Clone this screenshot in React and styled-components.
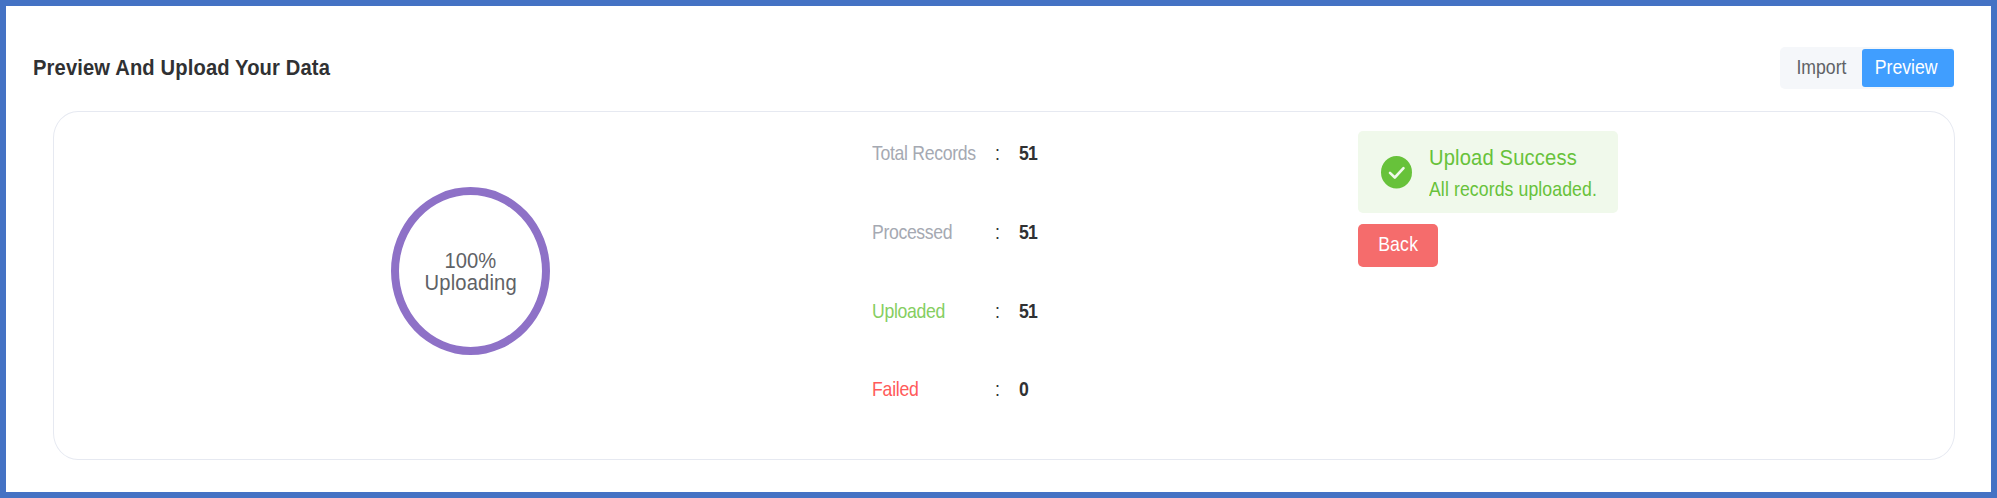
import React from "react";
import styled, { createGlobalStyle } from "styled-components";

const GlobalStyle = createGlobalStyle`
  * { box-sizing: border-box; }
  body { margin: 0; background: #fff; font-family: "Liberation Sans", Arial, sans-serif; }
`;

const Page = styled.main`
  width: 1997px;
  height: 498px;
  padding: 41px 37px 0 27px;
  border: 6px solid #4472c4;
  background: #fff;
  overflow: hidden;
`;

const Header = styled.header`
  display: flex;
  justify-content: space-between;
  align-items: center;
  height: 42px;
`;

const Text = styled.span`
  display: block;
  margin: 0;
  white-space: nowrap;
  font-size: ${(p) => p.$size || 18.67}px;
  line-height: ${(p) => p.$line || 24}px;
  font-weight: ${(p) => (p.$bold ? 700 : 400)};
  letter-spacing: ${(p) => p.$spacing || 0}px;
  color: ${(p) => p.$color || "#303133"};
  transform: scale(0.9467, 1.04);
  transform-origin: ${(p) => p.$origin || "left"} 60%;
`;

const Tabs = styled.nav`
  display: flex;
  align-items: center;
  width: 174px;
  height: 42px;
  border-radius: 5px;
  background: #f5f7fa;
`;

const Tab = styled.button`
  display: flex;
  justify-content: center;
  align-items: center;
  width: ${(p) => p.$width}px;
  height: 38px;
  padding: 0 ${(p) => (p.$active ? 4 : 0)}px 1px 0;
  border: 0;
  border-radius: 3px;
  font-family: inherit;
  background: ${(p) => (p.$active ? "#409eff" : "transparent")};
`;

const Card = styled.section`
  display: grid;
  grid-template-columns: 818px 486px 1fr;
  width: 1902px;
  height: 349px;
  margin: 22px 0 0 20px;
  border: 1px solid #e6e9f1;
  border-radius: 25px / 27px;
`;

const RingPanel = styled.div`
  display: flex;
  padding: 75px 0 0 337px;
`;

const Ring = styled.div`
  display: flex;
  flex-direction: column;
  align-items: center;
  justify-content: center;
  width: 159px;
  height: 168px;
  padding-top: 3px;
  border: 8px solid #8e71c7;
  border-radius: 50%;
`;

const Stats = styled.dl`
  margin: 0;
  padding-top: 31px;
`;

const StatRow = styled.div`
  display: grid;
  grid-template-columns: 123px 24px 60px;
  height: 78.8px;
`;

const Result = styled.div`
  padding-top: 19px;
`;

const Alert = styled.div`
  display: flex;
  align-items: center;
  width: 260px;
  height: 82px;
  padding-left: 23px;
  border-radius: 5px;
  background: #f0f9eb;
`;

const AlertBody = styled.div`
  margin-left: 17px;
  padding-top: 4px;
`;

const Back = styled.button`
  display: flex;
  justify-content: center;
  width: 80px;
  height: 43px;
  margin-top: 11px;
  padding: 9px 0 0;
  border: 0;
  border-radius: 5px;
  background: #f56c6c;
  font-family: inherit;
`;

const stats = [
  { label: "Total Records", value: 51, color: "#a5a9b2", spacing: -0.35 },
  { label: "Processed", value: 51, color: "#a5a9b2", spacing: -0.38 },
  { label: "Uploaded", value: 51, color: "#85ce61", spacing: -0.35 },
  { label: "Failed", value: 0, color: "#ff5a5a", spacing: -0.25 },
];

function SuccessIcon() {
  return (
    <svg width="31" height="33" viewBox="0 0 31 33" aria-hidden="true">
      <ellipse cx="15.5" cy="16.3" rx="15.5" ry="16.3" fill="#67c23a" />
      <path d="M9 16.9L13.8 21.5L22.5 12.2" fill="none" stroke="#f0f9eb" strokeWidth="2.6" strokeLinecap="round" strokeLinejoin="round" />
    </svg>
  );
}

export default function App() {
  return (
    <>
      <GlobalStyle />
      <Page>
        <Header>
          <Text as="h1" $size={21.33} $bold $spacing={0.13}>Preview And Upload Your Data</Text>
          <Tabs>
            <Tab $width={82}><Text $origin="center" $color="#606266">Import</Text></Tab>
            <Tab $width={92} $active><Text $origin="center" $color="#fff">Preview</Text></Tab>
          </Tabs>
        </Header>
        <Card>
          <RingPanel>
            <Ring>
              <Text $size={21.33} $line={21.5} $origin="center" $color="#606266">100%</Text>
              <Text $size={21.33} $line={21.5} $origin="center" $color="#606266" $spacing={0.15}>Uploading</Text>
            </Ring>
          </RingPanel>
          <Stats>
            {stats.map((s) => (
              <StatRow key={s.label}>
                <Text as="dt" $color={s.color} $spacing={s.spacing}>{s.label}</Text>
                <Text>:</Text>
                <Text as="dd" $bold $spacing={-1}>{s.value}</Text>
              </StatRow>
            ))}
          </Stats>
          <Result>
            <Alert>
              <SuccessIcon />
              <AlertBody>
                <Text $size={21.33} $line={32} $color="#67c23a" $spacing={0.15}>Upload Success</Text>
                <Text $line={32} $color="#67c23a" $spacing={0.1}>All records uploaded.</Text>
              </AlertBody>
            </Alert>
            <Back><Text $origin="center" $color="#fff" $spacing={0.2}>Back</Text></Back>
          </Result>
        </Card>
      </Page>
    </>
  );
}
